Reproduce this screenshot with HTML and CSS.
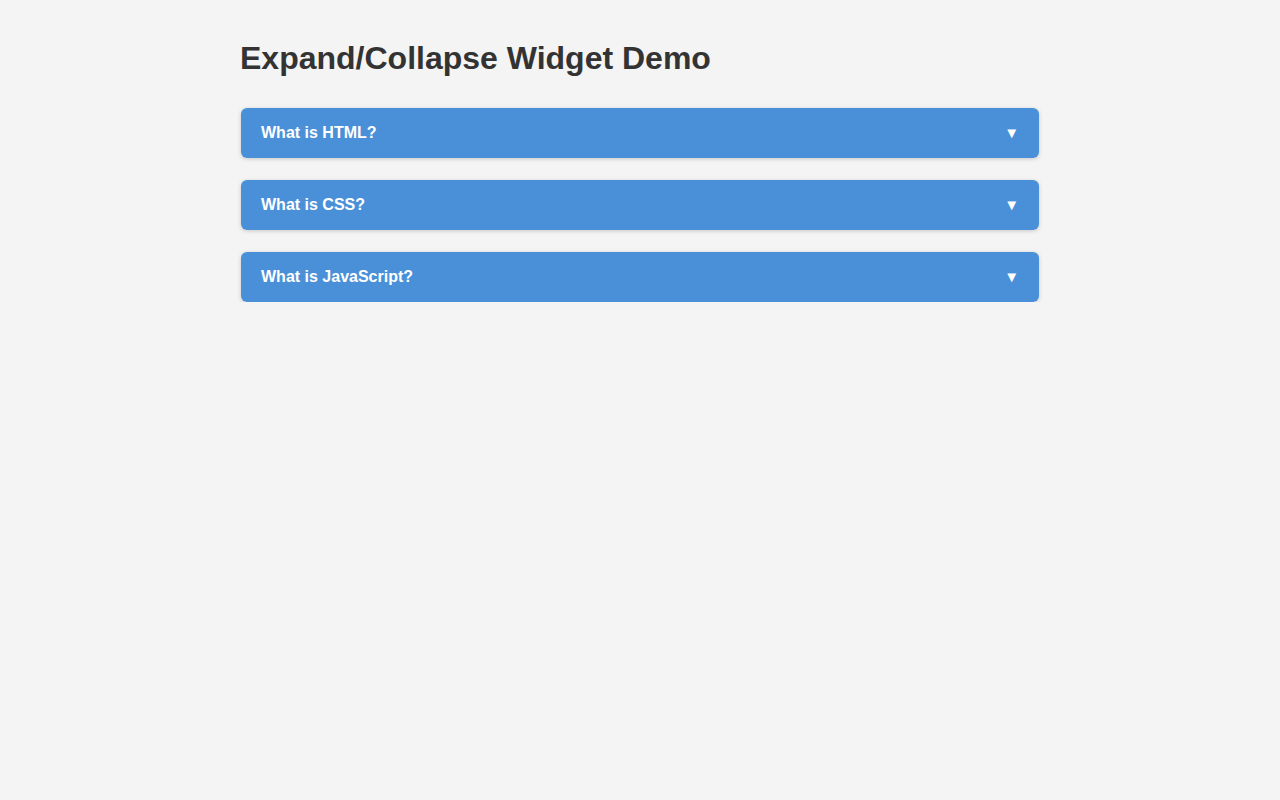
FILE: index.html
```html
<!DOCTYPE html>
<html lang="en">
<head>
<meta charset="utf-8">
<title>Expand/Collapse Widget Demo</title>
<link rel="stylesheet" href="styles.css">
</head>
<body>
<div class="container">
  <h1 class="title">Expand/Collapse Widget Demo</h1>
  <div class="accordion">
    <div class="item">
      <button class="header"><span>What is HTML?</span><span class="arrow">▼</span></button>
    </div>
    <div class="item">
      <button class="header"><span>What is CSS?</span><span class="arrow">▼</span></button>
    </div>
    <div class="item">
      <button class="header"><span>What is JavaScript?</span><span class="arrow">▼</span></button>
    </div>
  </div>
</div>
</body>
</html>
```
FILE: styles.css
```css
html, body {
  margin: 0;
  padding: 0;
}
body {
  background: #f4f4f4;
  font-family: "Liberation Sans", Arial, sans-serif;
  color: #333;
}
.container {
  width: 800px;
  margin: 0 auto;
  padding-top: 40px;
}
.title {
  margin: 0 0 31px 0;
  font-size: 32px;
  line-height: 37px;
  font-weight: bold;
  color: #333;
}
.accordion {
  display: flex;
  flex-direction: column;
  gap: 22px;
  padding: 0 1px;
}
.item {
  border-radius: 6px;
  box-shadow: 0 1px 4px rgba(0, 0, 0, 0.18);
  overflow: hidden;
}
.header {
  display: flex;
  justify-content: space-between;
  align-items: center;
  width: 100%;
  height: 50px;
  padding: 0 20px;
  border: none;
  background: #4a90d9;
  color: #fff;
  font-family: "Liberation Sans", Arial, sans-serif;
  font-size: 16px;
  font-weight: bold;
  text-align: left;
  cursor: pointer;
}
.arrow {
  font-size: 15px;
  line-height: 1;
  margin-top: -2px;
}
```
